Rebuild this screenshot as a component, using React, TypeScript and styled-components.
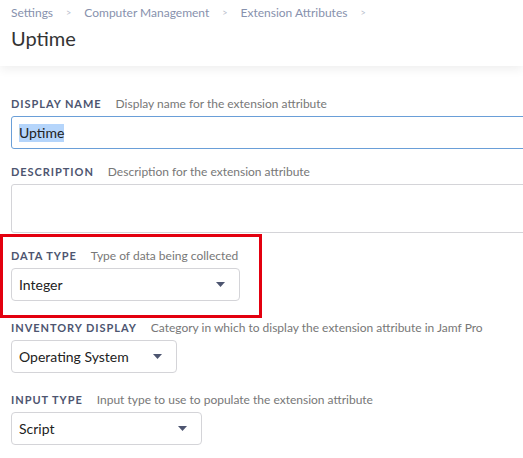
import styled, { createGlobalStyle } from "styled-components";

const GlobalStyle = createGlobalStyle`
  html, body {
    margin: 0;
    padding: 0;
    background: #ffffff;
    overflow: hidden;
  }
  body {
    font-family: Lato, "Liberation Sans", sans-serif;
    color: #222;
  }
`;

const Page = styled.div`
  width: 523px;
  height: 458px;
  overflow: hidden;
  background: #fff;
`;

const Header = styled.header`
  height: 66px;
  box-sizing: border-box;
  padding: 4px 11px 0;
  background: #fff;
  box-shadow: 0 3px 10px rgba(0, 0, 0, 0.07);
  position: relative;
  z-index: 1;
`;

const Crumbs = styled.nav`
  display: flex;
  align-items: center;
  gap: 12px;
  height: 16px;
  font-size: 12px;
  color: #8791ad;
`;

const Chevron = styled.span`
  font-size: 9px;
  color: #b7bdcc;
  margin: 0 1px;
`;

const Title = styled.h1`
  margin: 6px 0 0;
  font-size: 20px;
  font-weight: 400;
  color: #333;
  line-height: 24px;
`;

const Main = styled.main`
  padding: 29px 11px 0;
  display: flex;
  flex-direction: column;
  align-items: flex-start;
`;

const Field = styled.div<{ $after: number }>`
  display: flex;
  flex-direction: column;
  align-items: flex-start;
  margin-bottom: ${({ $after }) => $after}px;
`;

const Highlight = styled(Field)`
  position: relative;
  &::before {
    content: "";
    position: absolute;
    top: -13px;
    left: -11px;
    width: 262px;
    height: 84px;
    box-sizing: border-box;
    border: 3px solid #e3000f;
    pointer-events: none;
  }
`;

const LabelRow = styled.div`
  display: flex;
  align-items: center;
  height: 16px;
  gap: 14px;
  margin-bottom: 5px;
`;

const Label = styled.span`
  font-size: 11px;
  font-weight: 700;
  letter-spacing: 0.95px;
  text-transform: uppercase;
  color: #4d5570;
`;

const Hint = styled.span`
  font-size: 12px;
  color: #777;
`;

const TextBox = styled.div<{ $focused?: boolean; $tall?: boolean }>`
  width: 580px;
  height: ${({ $tall }) => ($tall ? "49px" : "33px")};
  box-sizing: border-box;
  border: 1px solid ${({ $focused }) => ($focused ? "#6a9fd8" : "#d4d4d8")};
  border-radius: 3px;
  padding: 0 7px;
  display: flex;
  align-items: center;
  font-size: 14px;
  color: #222;
  background: #fff;
`;

const Selected = styled.span`
  background: #b5d5fb;
  line-height: 18px;
`;

const Select = styled.div<{ $width: number }>`
  width: ${({ $width }) => $width}px;
  height: 33px;
  box-sizing: border-box;
  border: 1px solid #d4d4d8;
  border-radius: 4px;
  padding: 0 14px 0 7px;
  display: flex;
  align-items: center;
  justify-content: space-between;
  font-size: 14px;
  color: #222;
  background: #fff;
`;

const Caret = () => (
  <svg width="9" height="5" viewBox="0 0 9 5">
    <path d="M0 0 H9 L4.5 5 Z" fill="#4d5570" />
  </svg>
);

export default function App() {
  return (
    <Page>
      <GlobalStyle />
      <Header>
        <Crumbs>
          <span>Settings</span>
          <Chevron>&gt;</Chevron>
          <span>Computer Management</span>
          <Chevron>&gt;</Chevron>
          <span>Extension Attributes</span>
          <Chevron>&gt;</Chevron>
        </Crumbs>
        <Title>Uptime</Title>
      </Header>
      <Main>
        <Field $after={14}>
          <LabelRow>
            <Label>Display Name</Label>
            <Hint>Display name for the extension attribute</Hint>
          </LabelRow>
          <TextBox $focused>
            <Selected>Uptime</Selected>
          </TextBox>
        </Field>
        <Field $after={14}>
          <LabelRow>
            <Label>Description</Label>
            <Hint>Description for the extension attribute</Hint>
          </LabelRow>
          <TextBox $tall />
        </Field>
        <Highlight $after={18}>
          <LabelRow>
            <Label>Data Type</Label>
            <Hint>Type of data being collected</Hint>
          </LabelRow>
          <Select $width={229}>
            <span>Integer</span>
            <Caret />
          </Select>
        </Highlight>
        <Field $after={18}>
          <LabelRow>
            <Label>Inventory Display</Label>
            <Hint>Category in which to display the extension attribute in Jamf Pro</Hint>
          </LabelRow>
          <Select $width={166}>
            <span>Operating System</span>
            <Caret />
          </Select>
        </Field>
        <Field $after={0}>
          <LabelRow>
            <Label>Input Type</Label>
            <Hint>Input type to use to populate the extension attribute</Hint>
          </LabelRow>
          <Select $width={191}>
            <span>Script</span>
            <Caret />
          </Select>
        </Field>
      </Main>
    </Page>
  );
}
